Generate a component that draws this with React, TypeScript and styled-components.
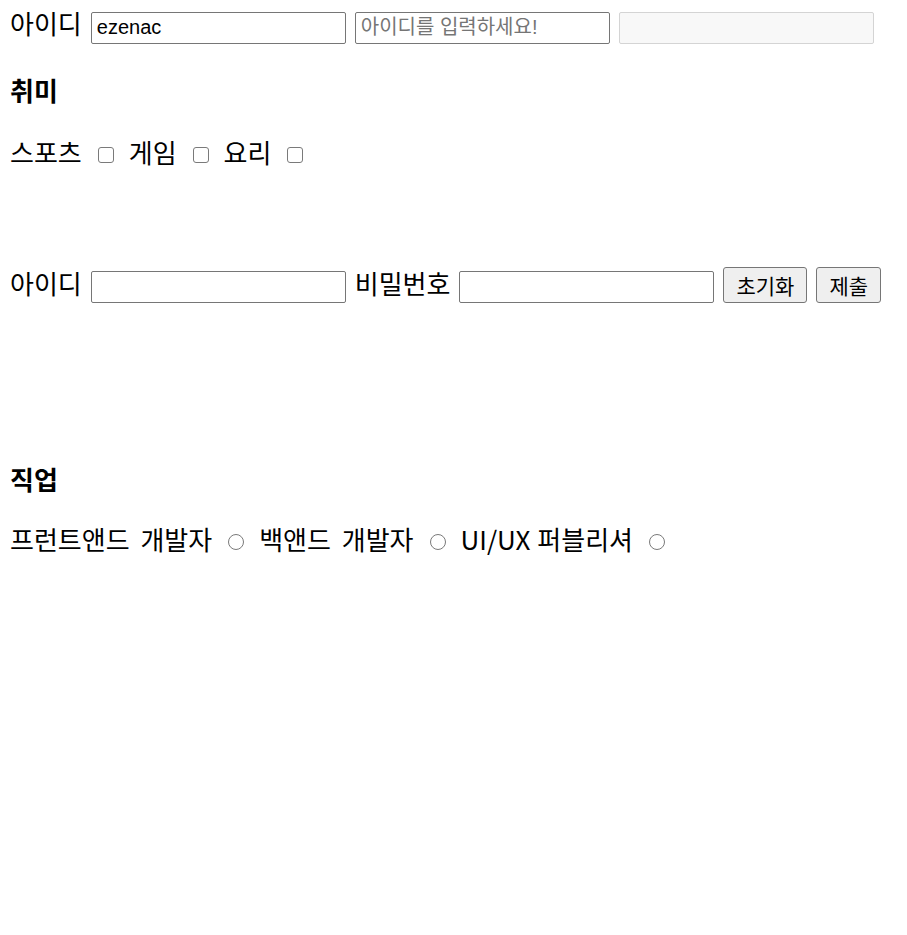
import React from "react"
import styled, { createGlobalStyle } from "styled-components"

const GlobalStyle = createGlobalStyle`
    html, body {
        margin: 0;
        padding: 0;
        background: #fff;
    }

    body {
        font-family: "Noto Sans CJK KR", "Noto Sans", sans-serif;
        color: #000;
    }
`

const Page = styled.div`
    display: flex;
    flex-direction: column;
    align-items: flex-start;
    box-sizing: border-box;
    min-height: 935px;
    padding: 7px 10px 0;
`

const Row = styled.div<{ $top?: number, $gap?: number }>`
    display: flex;
    align-items: baseline;
    gap: ${p => p.$gap ?? 0}px;
    margin-top: ${p => p.$top ?? 0}px;
`

const Label = styled.span<{ $tight?: boolean }>`
    font-size: 26px;
    line-height: 32px;
    word-spacing: ${p => (p.$tight ? 1 : 5)}px;
    white-space: nowrap;
`

const Heading = styled.h3<{ $top: number }>`
    margin: ${p => p.$top}px 0 0;
    font-size: 26px;
    line-height: 32px;
    font-weight: 700;
`

const TextInput = styled.input`
    box-sizing: border-box;
    width: 255px;
    height: 32px;
    margin: 0;
    padding: 0 5px;
    border: 1px solid #767676;
    border-radius: 2px;
    background: #fff;
    color: #000;
    font-family: "Liberation Sans", "Noto Sans CJK KR", sans-serif;
    font-size: 20px;
    outline: none;

    &::placeholder {
        color: #757575;
    }

    &:disabled {
        background: #f8f8f8;
        border-color: #d4d4d4;
    }
`

const Choice = styled.input`
    appearance: none;
    box-sizing: border-box;
    width: 16px;
    height: 16px;
    margin: 0 15px 0 16px;
    border: 1.5px solid #7a7a7a;
    border-radius: ${p => (p.type === "radio" ? "50%" : "3px")};
    background: #fff;
`

const Button = styled.button`
    box-sizing: border-box;
    height: 36px;
    margin: 0;
    padding: 0 12px;
    border: 1px solid #767676;
    border-radius: 3px;
    background: #efefef;
    color: #000;
    font-family: "Noto Sans CJK KR", sans-serif;
    font-size: 21px;
    line-height: 34px;
`

const hobbies = ["스포츠", "게임", "요리"]
const jobs = ["프런트앤드 개발자", "백앤드 개발자", "UI/UX 퍼블리셔"]

export default function App() {
    return (
        <>
            <GlobalStyle />
            <Page>
                <Row $gap={9}>
                    <Label>아이디</Label>
                    <TextInput defaultValue="ezenac" />
                    <TextInput placeholder="아이디를 입력하세요!" />
                    <TextInput disabled />
                </Row>

                <Heading $top={30}>취미</Heading>
                <Row $top={30}>
                    {hobbies.map(h => (
                        <React.Fragment key={h}>
                            <Label>{h}</Label>
                            <Choice type="checkbox" />
                        </React.Fragment>
                    ))}
                </Row>

                <Row $top={99} $gap={9}>
                    <Label>아이디</Label>
                    <TextInput />
                    <Label>비밀번호</Label>
                    <TextInput type="password" />
                    <Button type="reset">초기화</Button>
                    <Button type="submit">제출</Button>
                </Row>

                <Heading $top={160}>직업</Heading>
                <Row $top={28}>
                    {jobs.map(j => (
                        <React.Fragment key={j}>
                            <Label $tight={j.startsWith("UI")}>{j}</Label>
                            <Choice type="radio" name="job" />
                        </React.Fragment>
                    ))}
                </Row>
            </Page>
        </>
    )
}
